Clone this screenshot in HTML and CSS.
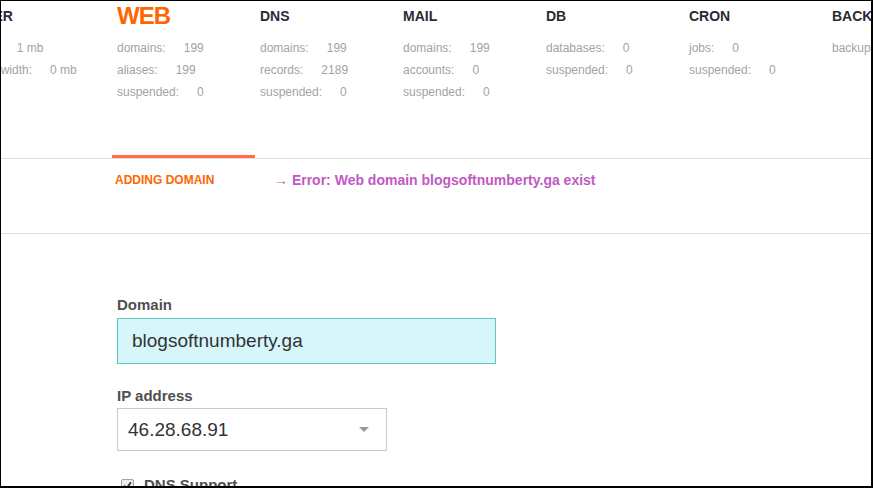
FILE: index.html
```html
<!DOCTYPE html>
<html lang="en">
<head>
  <meta charset="UTF-8">
  <title>Vesta - WEB</title>
  <link rel="stylesheet" href="styles.css">
</head>
<body>
  <div class="frame">

    <div class="stats">
      <div class="stat-col">
        <div class="stat-head">USER</div>
        <div class="stat-row"><span class="stat-label">disk:</span><span class="stat-val">1 mb</span></div>
        <div class="stat-row"><span class="stat-label">bandwidth:</span><span class="stat-val">0 mb</span></div>
      </div>
      <div class="stat-col active">
        <div class="stat-head">WEB</div>
        <div class="stat-row"><span class="stat-label">domains:</span><span class="stat-val">199</span></div>
        <div class="stat-row"><span class="stat-label">aliases:</span><span class="stat-val">199</span></div>
        <div class="stat-row"><span class="stat-label">suspended:</span><span class="stat-val">0</span></div>
      </div>
      <div class="stat-col">
        <div class="stat-head">DNS</div>
        <div class="stat-row"><span class="stat-label">domains:</span><span class="stat-val">199</span></div>
        <div class="stat-row"><span class="stat-label">records:</span><span class="stat-val">2189</span></div>
        <div class="stat-row"><span class="stat-label">suspended:</span><span class="stat-val">0</span></div>
      </div>
      <div class="stat-col">
        <div class="stat-head">MAIL</div>
        <div class="stat-row"><span class="stat-label">domains:</span><span class="stat-val">199</span></div>
        <div class="stat-row"><span class="stat-label">accounts:</span><span class="stat-val">0</span></div>
        <div class="stat-row"><span class="stat-label">suspended:</span><span class="stat-val">0</span></div>
      </div>
      <div class="stat-col">
        <div class="stat-head">DB</div>
        <div class="stat-row"><span class="stat-label">databases:</span><span class="stat-val">0</span></div>
        <div class="stat-row"><span class="stat-label">suspended:</span><span class="stat-val">0</span></div>
      </div>
      <div class="stat-col">
        <div class="stat-head">CRON</div>
        <div class="stat-row"><span class="stat-label">jobs:</span><span class="stat-val">0</span></div>
        <div class="stat-row"><span class="stat-label">suspended:</span><span class="stat-val">0</span></div>
      </div>
      <div class="stat-col">
        <div class="stat-head">BACKUP</div>
        <div class="stat-row"><span class="stat-label">backups:</span><span class="stat-val">0</span></div>
      </div>
    </div>

    <div class="tab-line">
      <div class="tab-mark"></div>
    </div>

    <div class="action-bar">
      <div class="action-title">ADDING DOMAIN</div>
      <div class="action-error">&rarr; Error: Web domain blogsoftnumberty.ga exist</div>
    </div>

    <form class="form">
      <label class="field-label">Domain</label>
      <input class="text-input" type="text" value="blogsoftnumberty.ga">

      <label class="field-label ip-label">IP address</label>
      <div class="select-box">
        <span>46.28.68.91</span>
        <span class="select-arrow"></span>
      </div>

      <div class="check-row">
        <span class="check-box">
          <svg width="9" height="9" viewBox="0 0 9 9"><path d="M1 4.6 L3.5 7.2 L8 1.2" fill="none" stroke="#333" stroke-width="1.8"/></svg>
        </span>
        <span class="check-label">DNS Support</span>
      </div>
    </form>

  </div>
</body>
</html>
```

FILE: styles.css
```css
html, body {
  margin: 0;
  padding: 0;
  background: #fff;
}
body {
  font-family: Arial, "Liberation Sans", sans-serif;
}
.frame {
  width: 873px;
  height: 488px;
  box-sizing: border-box;
  border-top: 1px solid #000;
  border-left: 1px solid #000;
  border-right: 2px solid #000;
  border-bottom: 2px solid #000;
  overflow: hidden;
  position: relative;
}

/* top counters */
.stats {
  display: flex;
  margin-left: -32px;
  padding-top: 1px;
  height: 153px;
}
.stat-col {
  flex: 0 0 143px;
  box-sizing: border-box;
  padding-left: 5px;
  white-space: nowrap;
}
.stat-head {
  height: 28px;
  line-height: 28px;
  font-size: 14px;
  font-weight: bold;
  color: #2a2a36;
  margin-bottom: 7px;
}
.stat-col.active .stat-head {
  font-size: 24px;
  letter-spacing: -1px;
  color: #ff6600;
}
.stat-row {
  font-size: 12px;
  line-height: 22px;
  color: #a3a3a3;
}
.stat-val {
  margin-left: 18px;
}

/* active tab underline */
.tab-line {
  border-bottom: 1px solid #dedede;
  height: 3px;
  padding-left: 111px;
}
.tab-mark {
  width: 143px;
  height: 3px;
  background: #ff6e45;
}

.action-bar {
  display: flex;
  align-items: center;
  height: 75px;
  border-bottom: 1px solid #dedede;
  padding-left: 114px;
  box-sizing: border-box;
  padding-bottom: 33px;
}
.action-title {
  width: 159px;
  font-size: 12px;
  font-weight: bold;
  color: #ff6600;
}
.action-error {
  font-size: 14px;
  font-weight: bold;
  color: #c159c4;
}

/* form */
.form {
  display: flex;
  flex-direction: column;
  align-items: flex-start;
  padding: 61px 0 0 116px;
}
.field-label {
  font-size: 15px;
  font-weight: bold;
  line-height: 20px;
  color: #4f4f4f;
  margin-bottom: 3px;
}
.ip-label {
  margin-top: 22px;
  margin-bottom: 2px;
}
.text-input {
  width: 379px;
  height: 46px;
  box-sizing: border-box;
  margin: 0;
  padding: 0 14px;
  border: 1px solid #5ec8bf;
  background: #d6f6fc;
  font-family: Arial, "Liberation Sans", sans-serif;
  font-size: 19px;
  color: #333;
  outline: none;
}
.select-box {
  width: 270px;
  height: 43px;
  box-sizing: border-box;
  border: 1px solid #c9c9c9;
  display: flex;
  align-items: center;
  justify-content: space-between;
  padding: 0 17px 0 10px;
  font-size: 19px;
  color: #333;
}
.select-arrow {
  width: 0;
  height: 0;
  border-left: 5px solid transparent;
  border-right: 5px solid transparent;
  border-top: 5px solid #999;
}
.check-row {
  display: flex;
  align-items: center;
  margin-top: 24px;
  padding-left: 4px;
}
.check-box {
  width: 11px;
  height: 11px;
  border: 1px solid #a0a0a0;
  border-radius: 2px;
  background: #ececec;
  display: flex;
  align-items: center;
  justify-content: center;
  margin-right: 10px;
}
.check-label {
  font-size: 15px;
  font-weight: bold;
  line-height: 20px;
  color: #4f4f4f;
}
```
